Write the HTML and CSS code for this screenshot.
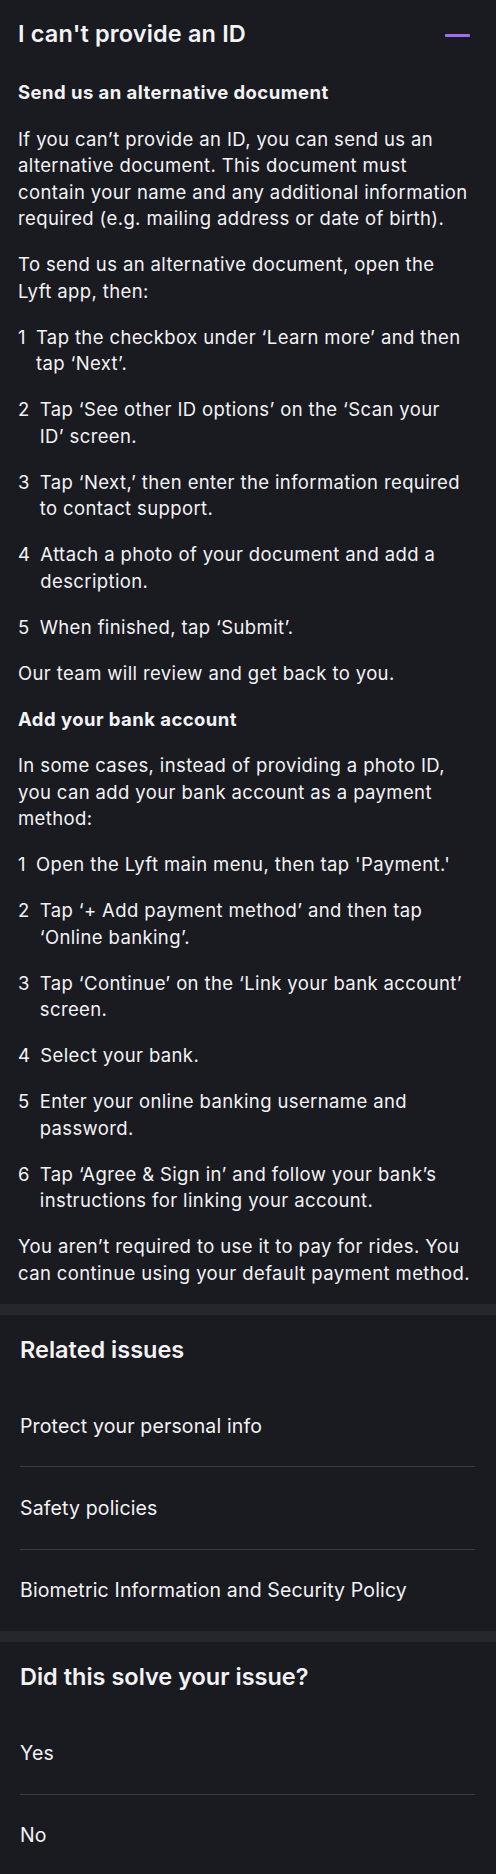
FILE: index.html
```html
<!DOCTYPE html>
<html lang="en">
<head>
<meta charset="utf-8">
<title>I can't provide an ID</title>
<link rel="stylesheet" href="styles.css">
</head>
<body>
<main class="page">
  <section class="article">
    <div class="article-head">
      <h1 class="article-title">I can't provide an ID</h1>
      <span class="collapse-icon" aria-label="Collapse"></span>
    </div>

    <h2 class="sub">Send us an alternative document</h2>
    <p class="para">If you can’t provide an ID, you can send us an alternative document. This document must contain your name and any additional information required (e.g. mailing address or date of birth).</p>
    <p class="para">To send us an alternative document, open the<br>Lyft app, then:</p>
    <ol class="steps">
      <li class="step"><span class="num">1</span><span class="txt">Tap the checkbox under ‘Learn more’ and then tap ‘Next’.</span></li>
      <li class="step"><span class="num">2</span><span class="txt">Tap ‘See other ID options’ on the ‘Scan your<br>ID’ screen.</span></li>
      <li class="step"><span class="num">3</span><span class="txt">Tap ‘Next,’ then enter the information required to contact support.</span></li>
      <li class="step"><span class="num">4</span><span class="txt">Attach a photo of your document and add a description.</span></li>
      <li class="step"><span class="num">5</span><span class="txt">When finished, tap ‘Submit’.</span></li>
    </ol>
    <p class="para">Our team will review and get back to you.</p>

    <h2 class="sub">Add your bank account</h2>
    <p class="para">In some cases, instead of providing a photo ID, you can add your bank account as a payment method:</p>
    <ol class="steps">
      <li class="step"><span class="num">1</span><span class="txt">Open the Lyft main menu, then tap 'Payment.'</span></li>
      <li class="step"><span class="num">2</span><span class="txt">Tap ‘+ Add payment method’ and then tap ‘Online banking’.</span></li>
      <li class="step"><span class="num">3</span><span class="txt">Tap ‘Continue’ on the ‘Link your bank account’ screen.</span></li>
      <li class="step"><span class="num">4</span><span class="txt">Select your bank.</span></li>
      <li class="step"><span class="num">5</span><span class="txt">Enter your online banking username and password.</span></li>
      <li class="step"><span class="num">6</span><span class="txt">Tap ‘Agree &amp; Sign in’ and follow your bank’s instructions for linking your account.</span></li>
    </ol>
    <p class="para">You aren’t required to use it to pay for rides. You can continue using your default payment method.</p>
  </section>

  <section class="panel">
    <h2 class="panel-title">Related issues</h2>
    <ul class="links">
      <li class="link-row">Protect your personal info</li>
      <li class="link-row">Safety policies</li>
      <li class="link-row">Biometric Information and Security Policy</li>
    </ul>
  </section>

  <section class="panel">
    <h2 class="panel-title">Did this solve your issue?</h2>
    <ul class="links">
      <li class="link-row">Yes</li>
      <li class="link-row">No</li>
    </ul>
  </section>
</main>
</body>
</html>
```

FILE: styles.css
```css
* { box-sizing: border-box; }

html, body {
  margin: 0;
  padding: 0;
  background: #1a1a21;
}

body {
  font-family: Inter, "Open Sans", Arial, sans-serif;
  color: #f3f3f5;
  -webkit-font-smoothing: antialiased;
}

.page {
  display: flex;
  flex-direction: column;
  gap: 11px;
  background: #26272c;
}

.article {
  background: #1a1a21;
  padding: 19px 18px 18px 18px;
}

.article-head {
  display: flex;
  align-items: center;
  justify-content: space-between;
  margin-bottom: 30px;
}

.article-title {
  margin: 0;
  font-size: 23.5px;
  line-height: 30px;
  font-weight: 600;
  letter-spacing: 0.15px;
}

.collapse-icon {
  display: block;
  width: 25px;
  height: 3px;
  border-radius: 1px;
  background: #a06ff0;
  margin-right: 8px;
  margin-top: 2px;
}

.sub {
  margin: 0 0 20px;
  font-size: 18.5px;
  line-height: 26.5px;
  font-weight: 700;
  letter-spacing: 0.45px;
}

.para {
  margin: 0 0 19.5px;
  font-size: 18.5px;
  line-height: 26.5px;
  letter-spacing: 0.38px;
}

.article .para:last-child { margin-bottom: 0; }

.steps {
  list-style: none;
  margin: 0 0 19.5px;
  padding: 0;
  display: flex;
  flex-direction: column;
  gap: 19.5px;
}

.step {
  display: flex;
  gap: 10px;
  font-size: 18.5px;
  line-height: 26.5px;
  letter-spacing: 0.38px;
}

.num { flex: none; }

.panel {
  background: #1a1a21;
  padding: 20px 21px 0 20px;
}

.panel-title {
  margin: 0 0 20px;
  font-size: 23.5px;
  line-height: 30px;
  font-weight: 600;
}

.links {
  list-style: none;
  margin: 0;
  padding: 0;
}

.link-row {
  font-size: 19.5px;
  line-height: 24px;
  letter-spacing: 0.15px;
  padding: 28.7px 0;
  border-bottom: 1px solid #3a3b40;
}

.link-row:last-child { border-bottom: none; }
```
